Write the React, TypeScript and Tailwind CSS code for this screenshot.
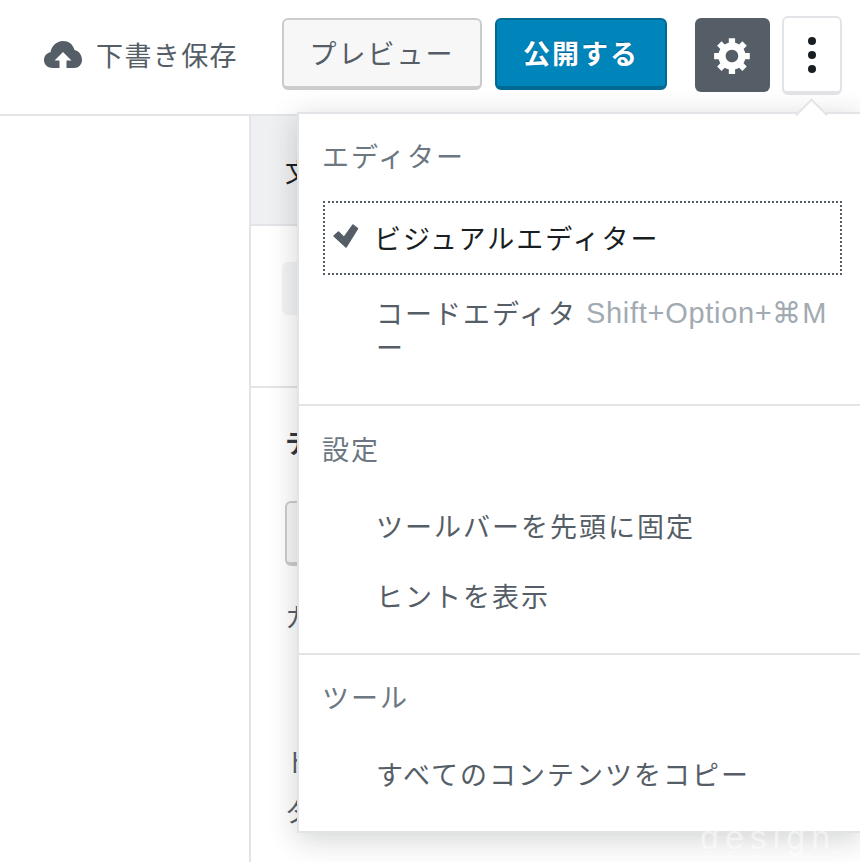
const jp = "font-['Noto_Sans_CJK_JP','Liberation_Sans',sans-serif]";

function MenuHeader({ label }: { label: string }) {
  return <div className="h-[34px] pl-[23px] text-[27px] leading-[34px] tracking-[2px] text-[#6c7781]">{label}</div>;
}

function MenuItem({ label, shortcut }: { label: string; shortcut?: string }) {
  return (
    <div className="flex items-start pl-[77px] pr-[33px] text-[27px] leading-[34px] tracking-[2px] text-[#555d66]">
      <span className="flex-1">{label}</span>
      {shortcut && (
        <span className="ml-[3px] whitespace-nowrap font-['Liberation_Sans',sans-serif] text-[29px] tracking-[0.7px] text-[#a2aab2]">
          {shortcut}
        </span>
      )}
    </div>
  );
}

export default function App() {
  return (
    <div className={`relative h-screen overflow-hidden bg-white ${jp}`}>
      {/* top bar */}
      <header className="flex h-[116px] items-start border-b-2 border-[#e2e4e7] pl-[44px]">
        <div className="mt-[38px] flex items-center text-[#555d66]">
          <svg width="38" height="30" viewBox="0 0 38 30">
            <path
              d="M9 28C3.500 28 0 24.500 0 20c0-4 2.700-7 6.500-7.700C7.500 6 12.500 1 19 1c5.500 0 10 3.200 11.500 9C35 11 38 15 38 20c0 4.500-3.500 8-8 8z"
              fill="#555d66"
            />
            <path d="M19 12l8.500 8.500H22.500V30h-7V20.500h-5z" fill="#fff" />
          </svg>
          <span className="ml-[14px] text-[27px] leading-[34px] tracking-[1.400px]">下書き保存</span>
        </div>
        <button className="ml-[44px] mt-[18px] h-[72px] w-[200px] rounded-[6px] border-2 border-b-4 border-[#cccccc] bg-[#f7f7f7] text-[27px] tracking-[2px] text-[#555d66]">
          プレビュー
        </button>
        <button className="ml-[13px] mt-[18px] h-[72px] w-[172px] rounded-[6px] border-2 border-b-4 border-[#006a95] bg-[#0085ba] text-[27px] font-bold tracking-[2px] text-white [text-shadow:0_-1px_1px_#006799]">
          公開する
        </button>
        <button className="ml-[28px] mt-[18px] flex h-[74px] w-[75px] items-center justify-center rounded-[6px] bg-[#555d66]">
          <svg width="42" height="42" viewBox="0 0 20 20" fill="#fff">
            <path d="M18 12h-2.180c-.170.700-.440 1.350-.810 1.930l1.540 1.540-2.100 2.100-1.540-1.540c-.580.360-1.230.630-1.910.790V19H8v-2.180c-.680-.160-1.330-.430-1.910-.790l-1.540 1.540-2.120-2.120 1.540-1.540c-.360-.580-.630-1.230-.790-1.910H1V9.030h2.170c.160-.700.440-1.350.800-1.940L2.430 5.550l2.100-2.100 1.540 1.540c.580-.370 1.240-.640 1.930-.810V2h3v2.180c.680.160 1.330.430 1.910.790l1.540-1.540 2.120 2.120-1.540 1.540c.360.590.640 1.240.800 1.940H18V12zm-8.500 1.500c1.660 0 3-1.340 3-3s-1.340-3-3-3-3 1.340-3 3 1.340 3 3 3z" />
          </svg>
        </button>
        <button className="ml-[12px] mt-[16px] flex h-[79px] w-[60px] flex-col items-center justify-center gap-[6px] rounded-[6px] border-2 border-b-4 border-[#e2e4e7] bg-white">
          <span className="h-[8px] w-[8px] rounded-full bg-[#191e23]" />
          <span className="h-[8px] w-[8px] rounded-full bg-[#191e23]" />
          <span className="h-[8px] w-[8px] rounded-full bg-[#191e23]" />
        </button>
      </header>

      {/* sidebar behind the menu */}
      <aside className="ml-[249px] h-[746px] border-l-2 border-[#e2e4e7] text-[26px] text-[#191e23]">
        <div className="flex h-[110px] items-center border-b-2 border-[#e2e4e7] bg-[#eff0f2] pl-[34px]">文書</div>
        <div className="h-[162px] border-b-2 border-[#e2e4e7] pl-[31px] pt-[36px]">
          <div className="h-[53px] w-[200px] rounded-[6px] bg-[#f3f4f5]" />
        </div>
        <div className="pl-[34px] pt-[36px]">
          <div className="font-bold leading-[36px] text-[#32373c]">テンプレート</div>
          <div className="mt-[41px] h-[65px] w-[200px] rounded-[6px] border-2 border-b-4 border-[#cccccc] bg-[#f7f7f7]" />
          <div className="mt-[32px] leading-[36px] text-[#555d66]">カテゴリー</div>
          <div className="mt-[109px] leading-[36px] text-[#555d66]">ト</div>
          <div className="mt-[14px] leading-[36px] text-[#555d66]">タグ</div>
        </div>
      </aside>

      {/* more tools menu */}
      <div className="absolute left-[297px] right-[-2px] top-[112px] h-[721px] border-2 border-[#e2e4e7] bg-white shadow-[0_6px_28px_rgba(25,30,35,0.2)]">
        <div className="absolute left-[501px] top-[-11px] h-[23px] w-[23px] rotate-45 border-l-2 border-t-2 border-[#e2e4e7] bg-white" />

        <section className="relative h-[292px] border-b-2 border-[#e2e4e7] pt-[25px]">
          <MenuHeader label="エディター" />
          <div className="relative ml-[24px] mr-[18px] mt-[28px] flex h-[74px] items-center border-2 border-dotted border-[#555d66] pl-[49px] text-[27px] tracking-[2px] text-[#191e23]">
            <svg className="absolute left-[7px] top-[20px]" width="27" height="26" viewBox="0 0 27 26">
              <path d="M2 13L6.500 9 12 14.500 21 2 25.500 5.500 14 24z" fill="#555d66" stroke="#555d66" strokeWidth="1.500" strokeLinejoin="round" />
            </svg>
            ビジュアルエディター
          </div>
          <div className="mt-[21px]">
            <MenuItem label="コードエディター" shortcut="Shift+Option+⌘M" />
          </div>
        </section>

        <section className="h-[249px] border-b-2 border-[#e2e4e7] pt-[26px]">
          <MenuHeader label="設定" />
          <div className="mt-[43px]">
            <MenuItem label="ツールバーを先頭に固定" />
          </div>
          <div className="mt-[36px]">
            <MenuItem label="ヒントを表示" />
          </div>
        </section>

        <section className="pt-[25px]">
          <MenuHeader label="ツール" />
          <div className="mt-[43px]">
            <MenuItem label="すべてのコンテンツをコピー" />
          </div>
        </section>
      </div>

      {/* watermark */}
      <span className="absolute left-[700px] top-[812px] font-['Liberation_Sans',sans-serif] text-[34px] tracking-[6px] text-white/50">
        design
      </span>
    </div>
  );
}
